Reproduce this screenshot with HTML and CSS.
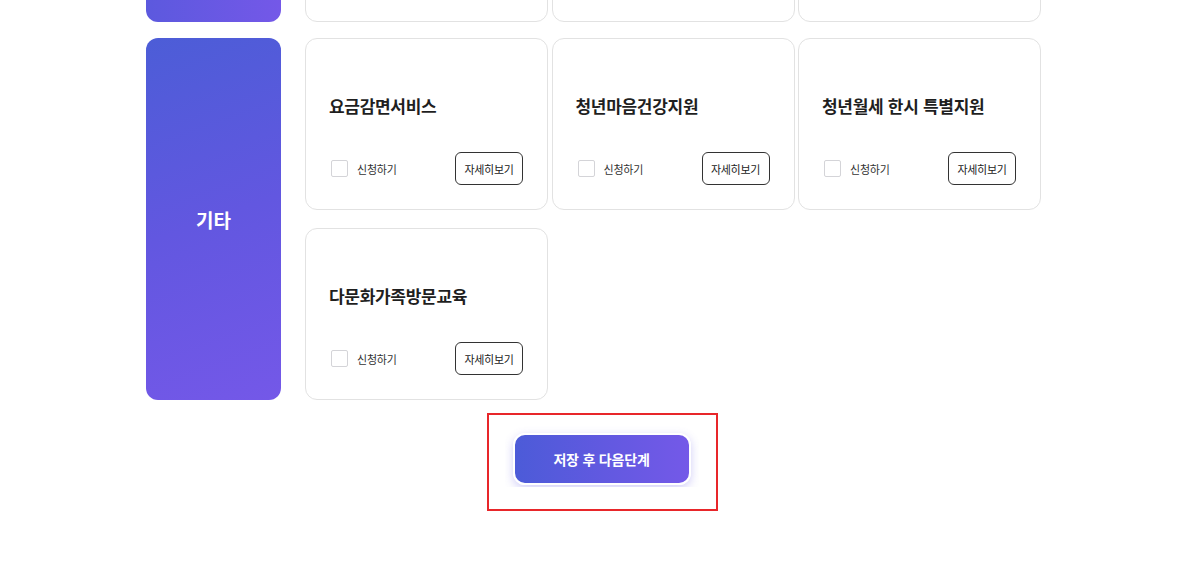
FILE: index.html
```html
<!DOCTYPE html>
<html lang="ko">
<head>
<meta charset="utf-8">
<title>서비스 신청</title>
<link rel="stylesheet" href="styles.css">
</head>
<body>
<div class="page">
  <section class="group group-top">
    <div class="group-label"><span>복지</span></div>
    <div class="cards">
      <div class="card card-short"></div>
      <div class="card card-short"></div>
      <div class="card card-short"></div>
    </div>
  </section>

  <section class="group">
    <div class="group-label"><span>기타</span></div>
    <div class="cards">
      <div class="card">
        <h3 class="card-title">요금감면서비스</h3>
        <div class="card-foot">
          <label class="apply"><span class="check"></span>신청하기</label>
          <button class="detail">자세히보기</button>
        </div>
      </div>
      <div class="card">
        <h3 class="card-title">청년마음건강지원</h3>
        <div class="card-foot">
          <label class="apply"><span class="check"></span>신청하기</label>
          <button class="detail">자세히보기</button>
        </div>
      </div>
      <div class="card">
        <h3 class="card-title">청년월세 한시 특별지원</h3>
        <div class="card-foot">
          <label class="apply"><span class="check"></span>신청하기</label>
          <button class="detail">자세히보기</button>
        </div>
      </div>
      <div class="card">
        <h3 class="card-title">다문화가족방문교육</h3>
        <div class="card-foot">
          <label class="apply"><span class="check"></span>신청하기</label>
          <button class="detail">자세히보기</button>
        </div>
      </div>
    </div>
  </section>

  <div class="actions">
    <div class="highlight">
      <div class="btn-clip">
        <button class="save">저장 후 다음단계</button>
      </div>
    </div>
  </div>
</div>
</body>
</html>
```

FILE: styles.css
```css
* { box-sizing: border-box; }
html, body { margin: 0; padding: 0; background: #fff; }
body {
  font-family: "Noto Sans CJK KR", "Noto Sans", sans-serif;
  color: #222;
  overflow: hidden;
}
.page {
  margin-top: -150px;
}
.group {
  display: grid;
  grid-template-columns: 135px 736px;
  column-gap: 24px;
  margin-left: 146px;
  margin-bottom: 16px;
}
.group-label {
  border-radius: 12px;
  background: linear-gradient(160deg, #4c5dd7 0%, #6257e0 50%, #7458e8 100%);
  display: flex;
  align-items: center;
  justify-content: center;
  color: #fff;
  font-size: 19px;
  font-weight: 700;
}
.group-top .group-label span { visibility: hidden; }
.group-top .group-label { background: linear-gradient(90deg, #5c59de 0%, #7458e8 100%); }
.cards {
  display: grid;
  grid-template-columns: repeat(3, 243px);
  column-gap: 3.5px;
  row-gap: 18px;
}
.card {
  border: 1px solid #e2e2e2;
  border-radius: 12px;
  min-height: 172px;
  padding: 55px 24px 24px 23px;
  display: flex;
  flex-direction: column;
  background: #fff;
}
.card-short { min-height: 172px; }
.card-title {
  margin: 0;
  font-size: 17px;
  line-height: 24px;
  font-weight: 700;
  color: #1f1f1f;
  letter-spacing: -0.3px;
  white-space: nowrap;
}
.card-foot {
  margin-top: auto;
  display: flex;
  align-items: center;
  justify-content: space-between;
}
.apply {
  display: flex;
  align-items: center;
  font-size: 11px;
  color: #333;
  letter-spacing: -0.2px;
}
.check {
  width: 17px;
  height: 17px;
  border: 1px solid #d4d4d8;
  border-radius: 2px;
  margin-left: 2px;
  margin-right: 9px;
  background: #fff;
}
.detail {
  font-family: inherit;
  height: 33px;
  width: 68px;
  padding: 0;
  border: 1px solid #333;
  border-radius: 6px;
  background: #fff;
  color: #222;
  font-size: 11px;
  letter-spacing: -0.3px;
}
.actions {
  display: flex;
  justify-content: center;
  margin-top: -3px;
  padding-left: 3px;
}
.highlight {
  border: 2px solid #e8262a;
  width: 231px;
  height: 98px;
  padding: 10px 0 0 16px;
}
.btn-clip {
  overflow: hidden;
  display: inline-block;
  padding: 8px 8px 2px;
}
.save {
  display: block;
  font-family: inherit;
  width: 178px;
  height: 52px;
  border: 2px solid #fff;
  border-radius: 12px;
  background: linear-gradient(90deg, #4c5bd8 0%, #6159e0 50%, #7459e8 100%);
  color: #fff;
  font-size: 14px;
  font-weight: 700;
  letter-spacing: -0.2px;
  box-shadow: 0 3px 10px rgba(98, 90, 230, 0.3);
}
```
